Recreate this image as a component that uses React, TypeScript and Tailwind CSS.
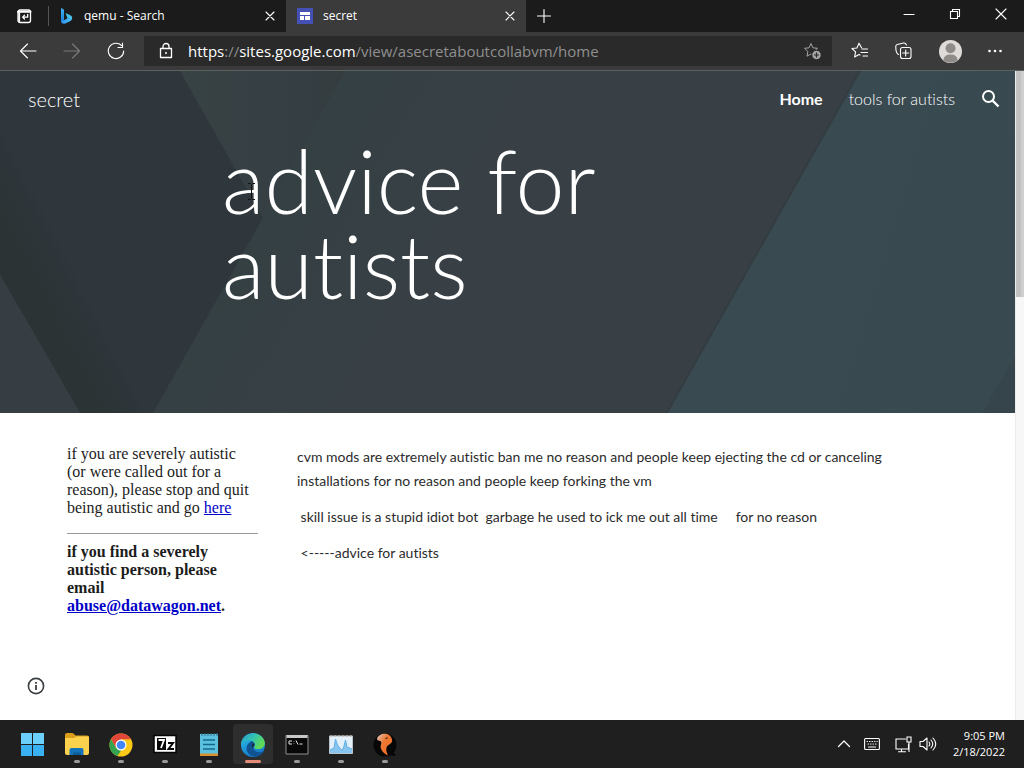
import type { ReactNode } from "react";

const uiFont = "font-['Open_Sans','Noto_Sans',sans-serif]";

function Stroke({ size = 16, children, className = "" }: { size?: number; children: ReactNode; className?: string }) {
  return (
    <svg width={size} height={size} viewBox={`0 0 ${size} ${size}`} fill="none" stroke="currentColor" strokeWidth="1.1" strokeLinecap="round" strokeLinejoin="round" className={className} aria-hidden="true">
      {children}
    </svg>
  );
}

function CloseIcon({ size = 10 }: { size?: number }) {
  return (
    <Stroke size={size}>
      <path d={size === 10 ? "M1 1l8 8M9 1l-8 8" : "M1 1l10 10M11 1L1 11"} />
    </Stroke>
  );
}

function TabBar() {
  return (
    <header className="flex h-8 items-stretch bg-[#1b1b1b] text-white">
      <button aria-label="Tab actions" className="flex w-12 shrink-0 items-center justify-center">
        <Stroke>
          <rect x="2" y="2" width="12.5" height="12.5" rx="2" strokeWidth="1.3" />
          <path d="M2 3.7h12.5" strokeWidth="2" />
          <path d="M3.2 3v11" strokeWidth="1.8" />
          <path d="M11.7 6.5v2.6H6.8M8.500 7.200L6.600 9.100l1.900 1.900" strokeWidth="1.3" />
        </Stroke>
      </button>
      <div className="flex w-[238px] shrink-0 items-center">
        <span className="h-5 w-px bg-[#555]" />
        <svg width="14" height="18" viewBox="0 0 14 18" className="ml-[11px] shrink-0" aria-hidden="true">
          <defs>
            <linearGradient id="bingA" x1="0" y1="0" x2="0" y2="1">
              <stop offset="0" stopColor="#3bb3f5" />
              <stop offset="1" stopColor="#1877d8" />
            </linearGradient>
            <linearGradient id="bingB" x1="0" y1="1" x2="1" y2="0">
              <stop offset="0" stopColor="#2f8cf0" />
              <stop offset="1" stopColor="#4fd6ee" />
            </linearGradient>
          </defs>
          <path d="M1 1l2.500 1.200Q4 2.500 4 3.200v9.600L2.500 16Q1 15.500 1 14z" fill="url(#bingA)" />
          <path d="M5.500 6l4.800 2.200Q12.800 9.500 12 12c-.5 1.500-1.500 2-2.500 2.500l-4.700 2.200Q2 17.500 1 14.500l3-1.200 3.500-2z" fill="url(#bingB)" />
        </svg>
        <span className="ml-2.5 flex-1 text-[12px] leading-4">qemu - Search</span>
        <button aria-label="Close tab" className="mr-[9px] p-0.5"><CloseIcon /></button>
      </div>
      <div className="flex w-60 shrink-0 items-center bg-[#3b3b3b]">
        <svg width="16" height="16" viewBox="0 0 16 16" className="ml-[11px] shrink-0" aria-hidden="true">
          <path d="M0 0h16v16H0z" fill="#4550b5" />
          <path d="M3 4h10v3H3zM3 8h4v4H3zM8 8h5v4H8z" fill="#fff" />
        </svg>
        <span className="ml-2.5 flex-1 text-[12px] leading-4">secret</span>
        <button aria-label="Close tab" className="mr-[9px] p-0.5"><CloseIcon /></button>
      </div>
      <button aria-label="New tab" className="flex w-9 items-center justify-center">
        <Stroke><path d="M8 1.500v13M1.500 8h13" /></Stroke>
      </button>
      <div className="ml-auto flex items-center pb-1">
        <button aria-label="Minimize" className="flex w-[46px] justify-center"><Stroke size={12}><path d="M1 6.500h10" /></Stroke></button>
        <button aria-label="Restore" className="flex w-[46px] justify-center">
          <Stroke size={12}><path d="M1.500 3.500h7v7h-7zM3.500 3.500v-2h7v7h-2" strokeLinejoin="miter" /></Stroke>
        </button>
        <button aria-label="Close" className="flex w-[46px] justify-center"><CloseIcon size={12} /></button>
      </div>
    </header>
  );
}

const starPath = "M8 1.500l1.900 4.300 4.600.5-3.400 3.200.9 4.700L8 11.900l-4 2.300.9-4.700L1.500 6.300l4.600-.5z";

function Toolbar() {
  return (
    <div className="flex h-[39px] items-center border-b border-[#59625f] bg-[#3b3b3b] text-white">
      <nav className="flex shrink-0 items-center gap-6 pl-[18px]" aria-label="Browser">
        <button aria-label="Back" className="flex w-5 justify-center">
          <Stroke size={18}><path d="M17 9H2M8.500 2L1.500 9l7 7" /></Stroke>
        </button>
        <button aria-label="Forward" className="flex w-5 justify-center text-[#7b7b7b]">
          <Stroke size={18}><path d="M1 9h15M9.500 2l7 7-7 7" /></Stroke>
        </button>
        <button aria-label="Reload" className="flex w-5 justify-center">
          <Stroke size={18}><path d="M14.500 3.500A7.700 7.700 0 1 0 16.700 9M15.500 1v4.500H11" /></Stroke>
        </button>
      </nav>
      <div className="ml-[18px] flex h-[30px] min-w-0 flex-1 items-center bg-[#2a2a2a]">
        <Stroke size={18} className="ml-[13px] shrink-0">
          <path d="M3.500 6.500h11v9h-11zM6 6.500V4.500a3 3 0 0 1 6 0v2" strokeWidth="1.300" />
          <path d="M9 10.500v1" strokeWidth="1.500" />
        </Stroke>
        <div role="textbox" aria-label="Address" className="ml-[13px] flex-1 truncate text-[15px] leading-5 text-[#8f8f8f]">
          <span className="text-white">https</span>://<span className="text-white">sites.google.com</span>/view/asecretaboutcollabvm/home
        </div>
        <button aria-label="Add to favorites" className="mr-2.5 text-[#a5a5a5]">
          <svg width="19" height="18" viewBox="0 0 19 18" fill="none" stroke="currentColor" aria-hidden="true">
            <path d={starPath} strokeLinejoin="round" />
            <circle cx="13.500" cy="13" r="4.700" fill="#a5a5a5" stroke="#2a2a2a" />
            <path d="M13.500 10.500v5M11 13h5" stroke="#2a2a2a" strokeWidth="1.200" />
          </svg>
        </button>
      </div>
      <div className="flex shrink-0 items-center pr-3.5">
        <button aria-label="Favorites" className="flex w-14 justify-center">
          <Stroke size={18}>
            <path d="M10.500 5.800L8 1.200 5.900 6l-5 .5 3.700 3.400-1 5L8 12.500l1 .5M11 7h5.500M10 10.500h6.500M12 14h4.500" />
          </Stroke>
        </button>
        <button aria-label="Collections" className="flex w-8 justify-center">
          <Stroke size={18}>
            <path d="M3.500 12.500C1.500 11.500.7 8.500.8 4.500a2 2 0 0 1 1.400-2l6.300-1.500q2-.4 3 2" />
            <rect x="5.500" y="5.500" width="10.500" height="11" rx="2" />
            <path d="M10.700 8v6M7.700 11h6" />
          </Stroke>
        </button>
        <button aria-label="Profile" className="flex w-[60px] justify-center">
          <svg width="23" height="23" viewBox="0 0 23 23" aria-hidden="true">
            <circle cx="11.500" cy="11.500" r="11.500" fill="#dedbd8" />
            <circle cx="11.500" cy="8.300" r="5" fill="#8e8b88" />
            <path d="M4.300 20.200q.5-5.700 7.200-5.700t7.200 5.700a11.500 11.500 0 0 1-14.400 0z" fill="#8e8b88" />
          </svg>
        </button>
        <button aria-label="Settings and more" className="flex w-[30px] justify-center">
          <svg width="16" height="16" viewBox="0 0 16 16" fill="#fff" aria-hidden="true">
            <circle cx="2.500" cy="8" r="1.300" /><circle cx="8" cy="8" r="1.300" /><circle cx="13.500" cy="8" r="1.300" />
          </svg>
        </button>
      </div>
    </div>
  );
}

function HeroArt() {
  return (
    <svg className="absolute inset-0 size-full" viewBox="0 0 1015 342" preserveAspectRatio="none" aria-hidden="true">
      <defs>
        <linearGradient id="darkFacet" x1="0" y1="0.800" x2="0.600" y2="0.400">
          <stop offset="0.250" stopColor="#2b3334" />
          <stop offset="0.500" stopColor="#2f363c" />
        </linearGradient>
        <linearGradient id="midFacet" gradientUnits="userSpaceOnUse" x1="240" y1="100" x2="430" y2="210">
          <stop offset="0" stopColor="#344043" />
          <stop offset="1" stopColor="#384045" />
        </linearGradient>
        <linearGradient id="topFacet" x1="0" y1="0" x2="1" y2="0">
          <stop offset="0" stopColor="#384346" />
          <stop offset="0.700" stopColor="#353e42" />
          <stop offset="1" stopColor="#343c40" />
        </linearGradient>
        <linearGradient id="tealFacet" x1="0" y1="0" x2="1" y2="0.300">
          <stop offset="0" stopColor="#3b4a52" />
          <stop offset="1" stopColor="#384a50" />
        </linearGradient>
      </defs>
      <path d="M0 0h1015v342H0z" fill="url(#midFacet)" />
      <path d="M180 0H345L263 147z" fill="url(#topFacet)" />
      <path d="M0 0h180l83 147-110 195H80L0 204z" fill="url(#darkFacet)" />
      <path d="M0 204l80 138H0z" fill="#363e43" />
      <path d="M861 0L668 342" stroke="#313c40" strokeWidth="4" opacity="0.700" />
      <path d="M861 0h154v342H668z" fill="url(#tealFacet)" />
      <path d="M1015 285v57h-33z" fill="#36454b" />
    </svg>
  );
}

function Hero() {
  return (
    <section className="relative bg-[#394046] pb-[105px] text-white">
      <HeroArt />
      <div className="relative flex h-14 items-center pr-[15px] pl-7">
        <a href="#home" className="text-[20px] leading-6 font-light">secret</a>
        <nav className="ml-auto flex items-center text-[16px] leading-5" aria-label="Site">
          <a href="#home" className="font-bold">Home</a>
          <a href="#tools" className="ml-[26px] font-light">tools for autists</a>
          <button aria-label="Search" className="ml-[26px]">
            <svg width="19" height="20" viewBox="0 0 19 20" fill="none" stroke="currentColor" strokeWidth="2" aria-hidden="true">
              <circle cx="7.500" cy="7.500" r="5.500" /><path d="M11.500 11.500l6 6" strokeWidth="2.400" />
            </svg>
          </button>
        </nav>
      </div>
      <h1 className="relative mt-[11px] px-[222px] text-[88px] leading-[85px] font-light">advice for autists</h1>
      <svg width="9" height="17" viewBox="0 0 9 17" className="absolute top-[112px] left-[247px]" fill="none" stroke="#111" aria-hidden="true">
        <path d="M1 .5h2.500l1 1 1-1H8M4.500 1.500v14M1 16.500h2.500l1-1 1 1H8" />
      </svg>
    </section>
  );
}

function Page() {
  return (
    <div className="flex flex-1 bg-white font-['Lato','Open_Sans',sans-serif] [font-variant-ligatures:none]">
      <main className="relative flex min-w-0 flex-1 flex-col">
        <Hero />
        <div className="flex gap-[39px] pt-8 pr-[67px] pl-[67px]">
          <aside className="w-[191px] shrink-0 font-['Liberation_Serif',serif] text-[16px] leading-[18px] text-[#1c1c1c]">
            <p>if you are severely autistic (or were called out for a reason), please stop and quit being autistic and go <a href="#here" className="text-[#0000c8] underline">here</a></p>
            <hr className="mt-4 mb-[9px] border-[#9a9a9a]" />
            <p className="font-bold">if you find a severely autistic person, please email <a href="mailto:abuse@datawagon.net" className="text-[#0000c8] underline">abuse@datawagon.net</a>.</p>
          </aside>
          <article className="flex min-w-0 flex-1 flex-col gap-3 text-[14px] leading-6 text-[#2c2c2c]">
            <p>cvm mods are extremely autistic ban me no reason and people keep ejecting the cd or canceling installations for no reason and people keep forking the vm</p>
            <p>{"\u00a0skill issue is a stupid idiot bot\u00a0 garbage he used to ick me out all time\u00a0 \u00a0 \u00a0for no reason"}</p>
            <p>{"\u00a0<-----advice for autists"}</p>
          </article>
        </div>
        <button aria-label="Site information" className="absolute bottom-[25px] left-[27px] text-[#3c4043]">
          <svg width="18" height="18" viewBox="0 0 18 18" fill="none" stroke="currentColor" strokeWidth="1.600" aria-hidden="true">
            <circle cx="9" cy="9" r="7.600" /><path d="M9 8v5M9 5v1.700" strokeWidth="1.800" />
          </svg>
        </button>
      </main>
      <div className="w-[9px] shrink-0 border-l border-[#ececec] bg-[#f7f7f7]" aria-hidden="true">
        <div className="h-[226px] border-r-3 border-[#cfcfcf] bg-[#c1c1c1]" />
      </div>
    </div>
  );
}

const art: Record<string, ReactNode> = {
  Start: (
    <>
      <path d="M2 2h11v11H2zM14 2h11v11H14z" fill="#6bd0fa" />
      <path d="M2 14h11v11H2zM14 14h11v11H14z" fill="#38b0f2" />
    </>
  ),
  "File Explorer": (
    <>
      <path d="M2 4q0-2 2-2h5q1 0 2 1l1.500 1.500H24q2 0 2 2V20H2z" fill="#dc9d18" />
      <path d="M2 7h9l2-1.500h13V22q0 2-2 2H4q-2 0-2-2z" fill="#fcd14d" />
      <path d="M6.500 24v-5q0-2 2-2h10q2 0 2 2v5z" fill="#1473ba" />
      <path d="M10 24v-2.500h7.500V24z" fill="#0c5b96" />
    </>
  ),
  Chrome: (
    <>
      <circle cx="14" cy="14" r="11.500" fill="#fbc916" />
      <path d="M4 8.300A11.500 11.500 0 0 1 24 8.300H14L9 16.900z" fill="#e0463a" />
      <path d="M4 8.300L9 16.900 14 19.700l-3.500 5.300A11.500 11.500 0 0 1 4 8.300z" fill="#33a350" />
      <circle cx="14" cy="14" r="5.500" fill="#fff" />
      <circle cx="14" cy="14" r="4.300" fill="#4285f4" />
    </>
  ),
  "7-Zip": (
    <>
      <path d="M3 4.500h22v17H3z" fill="#fff" stroke="#050505" strokeWidth="1.500" />
      <path d="M6 7h9v12H6z" fill="#080808" />
      <path d="M7.500 9h5.500l-3 8" fill="none" stroke="#fff" strokeWidth="1.800" />
      <path d="M17 12h5l-4.500 6H23" fill="none" stroke="#080808" strokeWidth="2" />
    </>
  ),
  Notepad: (
    <>
      <path d="M5 3h18v21H5z" fill="#5cc1df" />
      <path d="M5 22.500h18v2.500H5z" fill="#d89131" />
      <path d="M8 9h12M8 13.500h12M8 18h12" stroke="#14688d" strokeWidth="1.700" />
      <path d="M7 2v3M10 2v3M13 2v3M16 2v3M19 2v3M22 2v3" stroke="#276d86" strokeWidth="1" />
    </>
  ),
  Edge: (
    <>
      <circle cx="14" cy="14" r="12" fill="url(#edgeBlue)" />
      <path d="M2 14C2 4 15-1 22.500 5.500 29 12 25 19 17.500 18c-3-.5-2-2-1.500-4C16.500 9 6 7 2 14z" fill="url(#edgeGreen)" />
      <path d="M12 10.500c-8 5-4.500 14 4 15.300 4 .2 8-3 9-5.800-6 3-11 0-11-4.500 0-2 1.500-2.500 1-3.500-.5-1.500-2-2-3-1.500z" fill="#115290" />
      <path d="M14.500 12q-3 2 0 6c-1-3 1.500-3 1-5z" fill="#1b2733" />
    </>
  ),
  "Command Prompt": (
    <>
      <path d="M3 4.500h22v18.500H3z" fill="#080808" stroke="#909090" />
      <path d="M3.500 4h21v3h-21z" fill="#c8c8c8" />
      <path d="M9 10H6v3h3M11 10v.5M11 12.500v.5M13 9.500l2 4M16.500 13h3" stroke="#e5e5e5" fill="none" />
    </>
  ),
  "Process Monitor": (
    <>
      <path d="M2.500 5h23v17.500h-23z" fill="#e3eff9" stroke="#b9c3cc" />
      <path d="M3 22v-3l4-2 1.500-9 2 6 3 4 2 1 1.500-4 1.500-6 1.500 7L25 18v4z" fill="#87c4ee" />
      <path d="M3 19l4-2 1.500-9 2 6 3 4 2 1 1.500-4 1.500-6 1.500 7L25 18" fill="none" stroke="#5fb0e3" strokeWidth="1" />
      <path d="M3 5h22" stroke="#d6b59a" strokeDasharray="2 2" />
    </>
  ),
  QEMU: (
    <>
      <circle cx="14" cy="14" r="11.500" fill="#070707" />
      <path d="M17 19l7 5-7-1z" fill="#070707" stroke="#070707" strokeWidth="2" />
      <path d="M6 8C7 2 19 0 21 8.500c1 5-4.500 4.500-5.500 8-.7 3 .3 5.500 1.500 8-5.500-2.500-8.500-7-7-11 .6-2 .5-3-.8-3.500C8 9.600 6.500 9.800 6 8z" fill="url(#qemuOrange)" />
      <path d="M14 7.500q1.500-1.500 3-.8-.7 1.500-3 .8z" fill="#161616" />
    </>
  ),
};

function Taskbar() {
  return (
    <footer className="flex h-12 shrink-0 items-center bg-[#1f1f1f] text-white">
      <svg width="0" height="0" className="absolute" aria-hidden="true">
        <defs>
          <linearGradient id="edgeBlue" x1="0" y1="0" x2="0.500" y2="1"><stop offset="0" stopColor="#2cc1e8" /><stop offset="1" stopColor="#1577cc" /></linearGradient>
          <linearGradient id="edgeGreen" x1="0" y1="0" x2="1" y2="0.500"><stop offset="0" stopColor="#2898d7" /><stop offset="0.500" stopColor="#31c3b1" /><stop offset="1" stopColor="#64da54" /></linearGradient>
          <linearGradient id="qemuOrange" x1="0" y1="0" x2="1" y2="1"><stop offset="0" stopColor="#dcc8bc" /><stop offset="0.400" stopColor="#ef7935" /><stop offset="1" stopColor="#f06b20" /></linearGradient>
        </defs>
      </svg>
      <nav className="flex gap-1 pl-[13px]" aria-label="Taskbar">
        {Object.entries(art).map(([name, icon]) => (
          <button key={name} aria-label={name} className={`flex h-10 w-10 flex-col items-center rounded pt-[7px] ${name === "Edge" ? "bg-[#2e2e2e]" : ""}`}>
            <svg width="28" height="28" viewBox="0 0 28 28" aria-hidden="true">{icon}</svg>
            {name !== "Start" && <span className={`mt-px h-[3px] shrink-0 rounded-full ${name === "Edge" ? "w-4 bg-[#e58b79]" : "w-1.5 bg-[#9a9a9a]"}`} />}
          </button>
        ))}
      </nav>
      <div className="ml-auto flex items-center pr-[19px]">
        <button aria-label="Show hidden icons"><Stroke size={14}><path d="M1.500 9.500L7 4l5.500 5.500" strokeWidth="1.300" /></Stroke></button>
        <button aria-label="Touch keyboard" className="ml-[13px]">
          <Stroke><rect x=".6" y="2.500" width="14.800" height="11" rx="1" /><path d="M3 5.500h.5M5.500 5.500h.5M8 5.500h.5M10.500 5.500h.5M13 5.500h.2M4 8h.5M6.500 8h.5M9 8h.5M11.500 8h.5M4.500 11h7" /></Stroke>
        </button>
        <button aria-label="Network" className="ml-[15px]">
          <Stroke size={17}><path d="M10.500 3H1v10h12.500V8M6.500 13v2.500M3.500 15.800h7M12 1h4v5h-4zM14 6v9.500" strokeLinejoin="miter" /></Stroke>
        </button>
        <button aria-label="Volume" className="ml-[7px]">
          <Stroke size={18}><path d="M1 6.500h3L8 3v12l-4-3.500H1zM10 7q1.500 2 0 4M12 5q3.500 4 0 8M14 3q5.500 6 0 12" /></Stroke>
        </button>
        <time dateTime="2022-02-18T21:05" className="ml-4 text-right text-[11px] leading-4">9:05 PM<br />2/18/2022</time>
      </div>
    </footer>
  );
}

export default function App() {
  return (
    <div className={`flex min-h-screen flex-col ${uiFont}`}>
      <TabBar />
      <Toolbar />
      <Page />
      <Taskbar />
    </div>
  );
}
